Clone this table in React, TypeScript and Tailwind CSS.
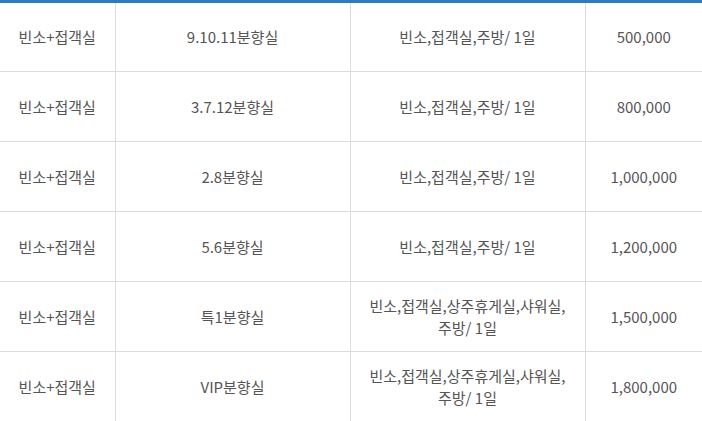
const rows = [
  ["빈소+접객실", "9.10.11분향실", "빈소,접객실,주방/ 1일", "500,000"],
  ["빈소+접객실", "3.7.12분향실", "빈소,접객실,주방/ 1일", "800,000"],
  ["빈소+접객실", "2.8분향실", "빈소,접객실,주방/ 1일", "1,000,000"],
  ["빈소+접객실", "5.6분향실", "빈소,접객실,주방/ 1일", "1,200,000"],
  ["빈소+접객실", "특1분향실", "빈소,접객실,상주휴게실,샤워실,주방/ 1일", "1,500,000"],
  ["빈소+접객실", "VIP분향실", "빈소,접객실,상주휴게실,샤워실,주방/ 1일", "1,800,000"],
];

export default function App() {
  return (
    <div
      className="w-[702px] h-[421px] overflow-hidden bg-white"
      style={{ fontFamily: '"Noto Sans CJK KR", "Noto Sans", sans-serif' }}
    >
      <table className="w-[702px] table-fixed border-collapse border-t-[3px] border-[#2e7bc4] text-[15px] leading-[22px] text-[#555]">
        <colgroup>
          <col className="w-[115px]" />
          <col className="w-[235px]" />
          <col className="w-[235px]" />
          <col className="w-[117px]" />
        </colgroup>
        <tbody>
          {rows.map((r, i) => (
            <tr key={i} className="h-[70px] border-b border-[#dcdcdc]">
              {r.map((c, j) => (
                <td
                  key={j}
                  className={
                    "px-[14px] text-center align-middle " +
                    (j < 3 ? "border-r border-[#dcdcdc]" : "")
                  }
                >
                  {c}
                </td>
              ))}
            </tr>
          ))}
        </tbody>
      </table>
    </div>
  );
}
